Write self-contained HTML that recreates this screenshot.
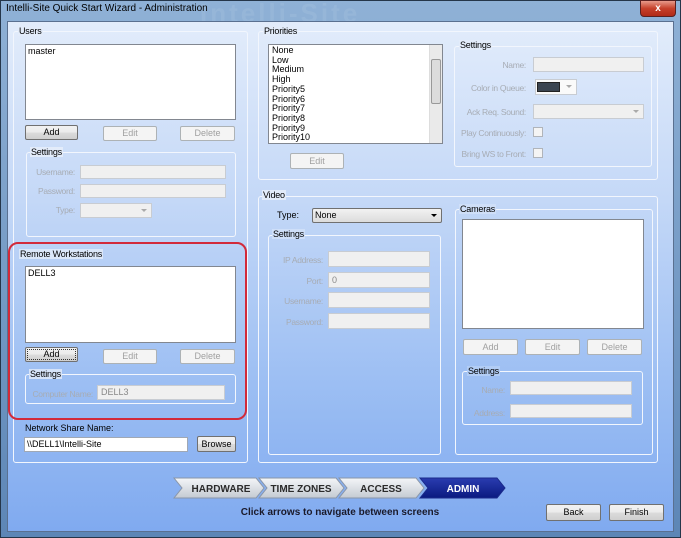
<!DOCTYPE html>
<html><head><style>
*{margin:0;padding:0;box-sizing:border-box}
body{width:681px;height:538px;overflow:hidden;font-family:"Liberation Sans",sans-serif;font-size:9px;color:#000;background:#3d5a7a;position:relative;white-space:nowrap}
.a{position:absolute}
.win{left:0;top:0;width:681px;height:538px;background:linear-gradient(#8fb1d6,#5d86b6);border:1px solid #25364a}
.client{left:7px;top:21px;width:667px;height:511px;background:linear-gradient(#e2ecfb 0%,#c4d8f7 35%,#9dbff3 70%,#80aaf0 100%);border:1px solid #5a7090}
.g{position:absolute;border:1px solid #f2f6fd;border-radius:3px}
.gl{position:absolute;background:#e3ecfa;padding:0 1px;font-size:9px;line-height:10px;letter-spacing:-0.2px}
.lb{position:absolute;background:#fff;border:1px solid #828790}
.btn{position:absolute;border:1px solid #707070;border-radius:2px;background:linear-gradient(#f2f2f2,#ebebeb 50%,#dcdcdc 50%,#cfcfcf);text-align:center;font-size:9px}
.dbtn{position:absolute;border:1px solid #adb2b5;border-radius:2px;background:#f4f4f4;color:#a0a0a0;text-align:center;font-size:9px}
.in{position:absolute;background:#f0f0f0;border:1px solid #c8ccd2;color:#888;font-size:9px;padding-left:3px}
.lab{position:absolute;color:#a7acb4;font-size:8.5px;letter-spacing:-0.3px;text-align:right;white-space:nowrap}
.chk{position:absolute;width:10px;height:10px;border:1px solid #b0b4ba;background:#f4f4f4}
.dd{position:absolute;right:4px;top:5px;width:0;height:0;border-left:3px solid transparent;border-right:3px solid transparent;border-top:3px solid #aaa}
</style></head><body>
<div class="a win"></div>
<div class="a" style="left:200px;top:-2px;font-size:26px;font-weight:bold;color:rgba(255,255,255,0.08);letter-spacing:3px">Intelli-Site</div>
<div class="a" style="left:6px;top:3px;color:#000;font-size:10px;line-height:12px">Intelli-Site Quick Start Wizard - Administration</div>
<div class="a" style="left:640px;top:0;width:36px;height:17px;border:1px solid #5a2020;border-radius:0 0 4px 4px;background:linear-gradient(#e89a8a,#c6402a 50%,#b02a18);color:#fff;font-weight:bold;font-size:10px;text-align:center;line-height:15px">x</div>
<div class="a client"></div>

<!-- Users -->
<div class="g" style="left:13px;top:31px;width:235px;height:432px"></div>
<div class="gl" style="left:18px;top:26px">Users</div>
<div class="lb" style="left:25px;top:44px;width:211px;height:76px"><div style="padding:1px 2px">master</div></div>
<div class="btn" style="left:25px;top:125px;width:53px;height:15px;line-height:13px">Add</div>
<div class="dbtn" style="left:103px;top:126px;width:54px;height:15px;line-height:13px">Edit</div>
<div class="dbtn" style="left:180px;top:126px;width:55px;height:15px;line-height:13px">Delete</div>
<div class="g" style="left:26px;top:152px;width:210px;height:85px"></div>
<div class="gl" style="left:30px;top:147px">Settings</div>
<div class="lab" style="left:30px;top:167px;width:45px">Username:</div>
<div class="in" style="left:80px;top:165px;width:146px;height:14px"></div>
<div class="lab" style="left:30px;top:186px;width:45px">Password:</div>
<div class="in" style="left:80px;top:184px;width:146px;height:14px"></div>
<div class="lab" style="left:30px;top:205px;width:45px">Type:</div>
<div class="in" style="left:80px;top:203px;width:72px;height:15px"><div class="dd"></div></div>

<!-- Remote workstations -->
<div class="a" style="left:8px;top:242px;width:239px;height:178px;border:2px solid #d22a3a;border-radius:10px"></div>
<div class="gl" style="left:19px;top:249px;background:#dbe7f9">Remote Workstations</div>
<div class="lb" style="left:25px;top:266px;width:211px;height:77px"><div style="padding:1px 2px">DELL3</div></div>
<div class="btn" style="left:25px;top:347px;width:53px;height:15px;line-height:13px;outline:1px dotted #333;outline-offset:-3px">Add</div>
<div class="dbtn" style="left:103px;top:349px;width:54px;height:15px;line-height:13px">Edit</div>
<div class="dbtn" style="left:180px;top:349px;width:55px;height:15px;line-height:13px">Delete</div>
<div class="g" style="left:25px;top:374px;width:211px;height:30px"></div>
<div class="gl" style="left:29px;top:369px;background:#d6e3f8">Settings</div>
<div class="lab" style="left:30px;top:389px;width:63px">Computer Name:</div>
<div class="in" style="left:97px;top:385px;width:128px;height:15px;line-height:13px">DELL3</div>
<div class="a" style="left:25px;top:423px">Network Share Name:</div>
<div class="a" style="left:24px;top:437px;width:164px;height:15px;background:#fff;border:1px solid #a0a8b4;padding-left:2px;line-height:13px">\\DELL1\Intelli-Site</div>
<div class="btn" style="left:197px;top:436px;width:39px;height:16px;line-height:14px">Browse</div>

<!-- Priorities -->
<div class="g" style="left:258px;top:31px;width:400px;height:149px"></div>
<div class="gl" style="left:263px;top:26px">Priorities</div>
<div class="lb" style="left:268px;top:44px;width:175px;height:100px;line-height:9.7px;padding:1px 3px">None<br>Low<br>Medium<br>High<br>Priority5<br>Priority6<br>Priority7<br>Priority8<br>Priority9<br>Priority10
<div class="a" style="right:0;top:0;width:13px;height:98px;background:#eaeaea;border-left:1px solid #ddd"><div class="a" style="left:1px;top:14px;width:10px;height:45px;background:#dcdcdc;border:1px solid #999;border-radius:2px"></div></div></div>
<div class="dbtn" style="left:290px;top:153px;width:54px;height:16px;line-height:14px">Edit</div>
<div class="g" style="left:454px;top:46px;width:198px;height:121px"></div>
<div class="gl" style="left:459px;top:40px">Settings</div>
<div class="lab" style="left:445px;top:60px;width:81px">Name:</div>
<div class="in" style="left:533px;top:57px;width:111px;height:15px"></div>
<div class="lab" style="left:445px;top:83px;width:81px">Color in Queue:</div>
<div class="in" style="left:535px;top:79px;width:42px;height:16px;background:#fafafa"><div class="a" style="left:1px;top:2px;width:23px;height:10px;background:#3a4450;border:1px solid #222"></div><div class="dd"></div></div>
<div class="lab" style="left:445px;top:107px;width:81px">Ack Req. Sound:</div>
<div class="in" style="left:533px;top:104px;width:111px;height:15px"><div class="dd"></div></div>
<div class="lab" style="left:445px;top:128px;width:81px">Play Continuously:</div>
<div class="chk" style="left:533px;top:127px"></div>
<div class="lab" style="left:445px;top:149px;width:81px">Bring WS to Front:</div>
<div class="chk" style="left:533px;top:148px"></div>

<!-- Video -->
<div class="g" style="left:258px;top:196px;width:400px;height:267px"></div>
<div class="gl" style="left:262px;top:190px">Video</div>
<div class="a" style="left:277px;top:210px">Type:</div>
<div class="a" style="left:312px;top:208px;width:130px;height:15px;border:1px solid #707070;border-radius:2px;background:linear-gradient(#f2f2f2,#dcdcdc);padding-left:2px;line-height:13px">None<div class="dd" style="border-top-color:#000;top:5px"></div></div>
<div class="g" style="left:268px;top:235px;width:173px;height:220px"></div>
<div class="gl" style="left:272px;top:229px;background:#cfdff8">Settings</div>
<div class="lab" style="left:270px;top:255px;width:53px">IP Address:</div>
<div class="in" style="left:328px;top:251px;width:102px;height:16px"></div>
<div class="lab" style="left:270px;top:276px;width:53px">Port:</div>
<div class="in" style="left:328px;top:272px;width:102px;height:16px;line-height:14px">0</div>
<div class="lab" style="left:270px;top:296px;width:53px">Username:</div>
<div class="in" style="left:328px;top:292px;width:102px;height:16px"></div>
<div class="lab" style="left:270px;top:317px;width:53px">Password:</div>
<div class="in" style="left:328px;top:313px;width:102px;height:16px"></div>
<div class="g" style="left:455px;top:209px;width:198px;height:246px"></div>
<div class="gl" style="left:459px;top:204px;background:#cfdff8">Cameras</div>
<div class="lb" style="left:462px;top:219px;width:182px;height:110px"></div>
<div class="dbtn" style="left:463px;top:339px;width:55px;height:16px;line-height:14px">Add</div>
<div class="dbtn" style="left:525px;top:339px;width:55px;height:16px;line-height:14px">Edit</div>
<div class="dbtn" style="left:587px;top:339px;width:55px;height:16px;line-height:14px">Delete</div>
<div class="g" style="left:462px;top:371px;width:181px;height:54px"></div>
<div class="gl" style="left:467px;top:366px;background:#b2cdf5">Settings</div>
<div class="lab" style="left:465px;top:385px;width:40px">Name:</div>
<div class="in" style="left:510px;top:381px;width:122px;height:14px"></div>
<div class="lab" style="left:465px;top:408px;width:40px">Address:</div>
<div class="in" style="left:510px;top:404px;width:122px;height:14px"></div>

<!-- Arrows -->
<svg class="a" style="left:170px;top:476px" width="340" height="26">
<defs><linearGradient id="s" x1="0" y1="0" x2="0" y2="1"><stop offset="0" stop-color="#f4f6f8"/><stop offset="1" stop-color="#c4cad2"/></linearGradient>
<linearGradient id="b" x1="0" y1="0" x2="0" y2="1"><stop offset="0" stop-color="#2a3cb0"/><stop offset="1" stop-color="#0a1a80"/></linearGradient></defs>
<polygon points="4,2 86,2 94,12 86,22 4,22 12,12" fill="url(#s)" stroke="#8a96a8"/>
<polygon points="89,2 166,2 174,12 166,22 89,22 97,12" fill="url(#s)" stroke="#8a96a8"/>
<polygon points="169,2 246,2 254,12 246,22 169,22 177,12" fill="url(#s)" stroke="#8a96a8"/>
<polygon points="250,2 327,2 335,12 327,22 250,22 258,12" fill="url(#b)" stroke="#1a2a8a"/>
<g font-family="Liberation Sans,sans-serif" font-size="10" font-weight="bold" text-anchor="middle">
<text x="51" y="16" fill="#2a2a2a">HARDWARE</text>
<text x="131" y="16" fill="#2a2a2a">TIME ZONES</text>
<text x="211" y="16" fill="#2a2a2a">ACCESS</text>
<text x="293" y="16" fill="#fff">ADMIN</text></g>
</svg>
<div class="a" style="left:150px;top:507px;width:380px;text-align:center;font-size:10px;font-weight:bold;color:#1a1a2a">Click arrows to navigate between screens</div>
<div class="btn" style="left:546px;top:504px;width:55px;height:17px;line-height:15px">Back</div>
<div class="btn" style="left:609px;top:504px;width:55px;height:17px;line-height:15px">Finish</div>
</body></html>
